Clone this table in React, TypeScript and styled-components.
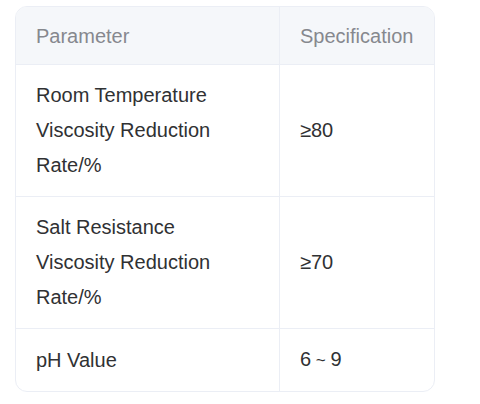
import React from "react";
import styled, { createGlobalStyle } from "styled-components";

const Global = createGlobalStyle`
  html, body { margin: 0; padding: 0; background: #ffffff; }
  body { font-family: "Liberation Sans", Arial, sans-serif; }
`;

const Page = styled.div`
  padding: 6px 0 0 15px;
`;

const Card = styled.div`
  width: 420px;
  box-sizing: border-box;
  border: 1px solid #ebeef5;
  border-radius: 12px;
  overflow: hidden;
`;

const Table = styled.table`
  width: 100%;
  border-collapse: collapse;
  table-layout: fixed;
  font-size: 20px;
`;

const Th = styled.th<{ $w?: number }>`
  width: ${(p) => (p.$w ? `${p.$w}px` : "auto")};
  background: #f5f7fa;
  color: #86888e;
  font-weight: normal;
  text-align: left;
  padding: 17px 20px 15px;
  line-height: 25px;
  border-bottom: 1px solid #ebeef5;
  white-space: nowrap;
  & + & { border-left: 1px solid #ebeef5; }
`;

const Tr = styled.tr`
  & + & td { border-top: 1px solid #ebeef5; }
`;

const Td = styled.td`
  color: #303133;
  padding: 13px 20px;
  line-height: 35px;
  vertical-align: middle;
  & + & { border-left: 1px solid #ebeef5; }
`;

const rows: [string[], string][] = [
  [["Room Temperature", "Viscosity Reduction", "Rate/%"], "≥80"],
  [["Salt Resistance", "Viscosity Reduction", "Rate/%"], "≥70"],
  [["pH Value"], "6 ~ 9"],
];

const Small = styled.span`
  font-size: 17px;
`;

export default function App() {
  return (
    <Page>
      <Global />
      <Card>
        <Table>
          <thead>
            <tr>
              <Th $w={223}>Parameter</Th>
              <Th>Specification</Th>
            </tr>
          </thead>
          <tbody>
            {rows.map(([lines, val], i) => (
              <Tr key={i}>
                <Td>
                  {lines.map((l, j) => (
                    <div key={j}>{l}</div>
                  ))}
                </Td>
                <Td>
                  {val === "6 ~ 9" ? (
                    <>
                      6<Small> ~ </Small>9
                    </>
                  ) : (
                    val
                  )}
                </Td>
              </Tr>
            ))}
          </tbody>
        </Table>
      </Card>
    </Page>
  );
}
